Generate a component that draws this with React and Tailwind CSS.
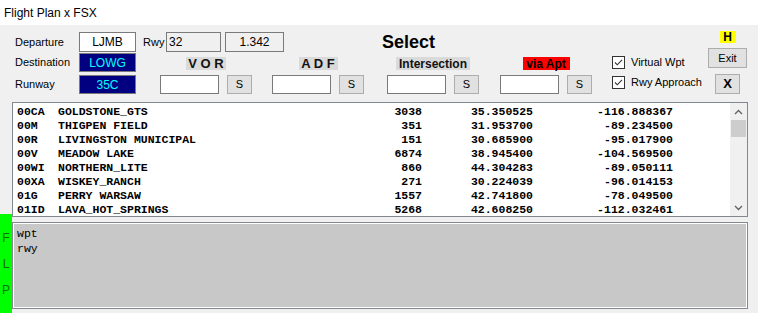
import React from "react";

const rows = [
  ["00CA", "GOLDSTONE_GTS", "3038", "35.350525", "-116.888367"],
  ["00M", "THIGPEN FIELD", "351", "31.953700", "-89.234500"],
  ["00R", "LIVINGSTON MUNICIPAL", "151", "30.685900", "-95.017900"],
  ["00V", "MEADOW LAKE", "6874", "38.945400", "-104.569500"],
  ["00WI", "NORTHERN_LITE", "860", "44.304283", "-89.050111"],
  ["00XA", "WISKEY_RANCH", "271", "30.224039", "-96.014153"],
  ["01G", "PERRY WARSAW", "1557", "42.741800", "-78.049500"],
  ["01ID", "LAVA_HOT_SPRINGS", "5268", "42.608250", "-112.032461"],
];

const sans = "font-['Liberation_Sans',Arial,sans-serif]";
const mono = "font-['Liberation_Mono','Courier_New',monospace]";

function SButton() {
  return (
    <div className="w-[25px] h-[19px] bg-[#e1e1e1] border border-[#adadad] flex items-center justify-center text-[11px] text-black">
      S
    </div>
  );
}

function Group({ label, labelClass, labelW }) {
  return (
    <div className="flex flex-col items-center w-[92px]">
      <div
        className={`h-[13px] flex items-center justify-center font-bold leading-none ${labelClass}`}
        style={{ width: labelW }}
      >
        {label}
      </div>
      <div className="mt-[5px] flex items-center gap-[8px]">
        <div className="w-[59px] h-[19px] bg-white border border-[#7a7a7a]" />
        <SButton />
      </div>
    </div>
  );
}

function Check({ label }) {
  return (
    <div className="flex items-center h-[13px]">
      <div className="w-[13px] h-[13px] bg-white border border-[#333333] flex items-center justify-center">
        <svg width="11" height="11" viewBox="0 0 11 11">
          <path d="M2 5.5 L4.3 7.8 L9 2.8" fill="none" stroke="#333333" strokeWidth="1.1" />
        </svg>
      </div>
      <span className="ml-[6px] text-[11px] leading-none text-black">{label}</span>
    </div>
  );
}

export default function App() {
  return (
    <div className={`w-[758px] h-[313px] bg-[#f0f0f0] flex flex-col overflow-hidden ${sans}`}>
      {/* title bar */}
      <div className="h-[25px] bg-white flex items-center pl-[4px] text-[12px] text-black shrink-0">
        Flight Plan x FSX
      </div>

      {/* controls */}
      <div className="h-[77px] flex items-start pl-[15px] shrink-0">
        {/* labels + boxes */}
        <div className="w-[121px] flex flex-col text-[11px] text-black">
          <div className="mt-[7px] h-[20px] flex items-center">
            <span className="w-[64px]">Departure</span>
            <div className="w-[57px] h-[20px] bg-white border border-[#7a7a7a] flex items-center justify-center text-[12px]">
              LJMB
            </div>
          </div>
          <div className="mt-[1px] h-[19px] flex items-center">
            <span className="w-[64px]">Destination</span>
            <div className="w-[57px] h-[19px] bg-[#000080] border border-[#7a7a7a] flex items-center justify-center text-[12px] text-[#00ffff]">
              LOWG
            </div>
          </div>
          <div className="mt-[3px] h-[19px] flex items-center">
            <span className="w-[64px]">Runway</span>
            <div className="w-[57px] h-[19px] bg-[#000080] border border-[#7a7a7a] flex items-center justify-center text-[12px] text-[#00ffff]">
              35C
            </div>
          </div>
        </div>

        {/* middle */}
        <div className="ml-[7px] w-[449px] flex flex-col">
          <div className="mt-[7px] h-[20px] flex items-center text-[11px] text-black">
            <span className="w-[23px] text-[11px]">Rwy</span>
            <div className="w-[55px] h-[20px] bg-[#f0f0f0] border border-[#7a7a7a] flex items-center pl-[2px] text-[12px]">
              32
            </div>
            <div className="ml-[4px] w-[59px] h-[20px] bg-[#f0f0f0] border border-[#7a7a7a] flex items-center justify-center text-[12px]">
              1.342
            </div>
            <span className="ml-[98px] text-[18px] font-bold leading-none text-black">Select</span>
          </div>
          <div className="mt-[5px] ml-[17px] flex items-start">
            <Group label="V O R" labelClass="bg-[#dadada] text-[13px] text-[#111]" labelW={40} />
            <div className="ml-[20px]">
              <Group label="A D F" labelClass="bg-[#dadada] text-[13px] text-[#111]" labelW={39} />
            </div>
            <div className="ml-[23px]">
              <Group label="Intersection" labelClass="bg-[#dadada] text-[12px] text-[#111]" labelW={74} />
            </div>
            <div className="ml-[21px]">
              <Group label="via Apt" labelClass="bg-[#ff0000] text-[12px] text-black" labelW={47} />
            </div>
          </div>
        </div>

        {/* checkboxes */}
        <div className="ml-[20px] w-[96px] flex flex-col">
          <div className="mt-[31px]">
            <Check label="Virtual Wpt" />
          </div>
          <div className="mt-[7px]">
            <Check label="Rwy Approach" />
          </div>
        </div>

        {/* right buttons */}
        <div className="w-[39px] flex flex-col items-center">
          <div className="mt-[6px] w-[16px] h-[12px] bg-[#ffff00] flex items-center justify-center text-[12px] font-bold leading-none text-black">
            H
          </div>
          <div className="mt-[5px] w-[39px] h-[20px] bg-[#e1e1e1] border border-[#adadad] flex items-center justify-center text-[11px] text-black">
            Exit
          </div>
          <div className="mt-[6px] w-[25px] h-[20px] bg-[#e1e1e1] border border-[#adadad] flex items-center justify-center text-[13px] font-bold text-black">
            X
          </div>
        </div>
      </div>

      {/* bottom */}
      <div className="flex-1 flex">
        <div className="w-[12px] flex flex-col">
          <div className="h-[112px]" />
          <div className="flex-1 bg-[#00ff00] flex flex-col items-center text-[12px] text-[#0b6e0b] leading-none">
            <span className="mt-[18px]">F</span>
            <span className="mt-[14px]">L</span>
            <span className="mt-[14px]">P</span>
          </div>
        </div>
        <div className="w-[736px] flex flex-col">
          {/* list box */}
          <div className="h-[115px] bg-white border border-[#828790] flex">
            <div className={`flex-1 pt-[2px] pl-[4px] ${mono} font-bold text-[11.5px] text-black`}>
              {rows.map((r) => (
                <div key={r[0]} className="h-[14px] flex items-center whitespace-pre leading-none">
                  <span className="w-[41px]">{r[0]}</span>
                  <span className="w-[322px]">{r[1]}</span>
                  <span className="w-[42px] text-right">{r[2]}</span>
                  <span className="w-[111px] text-right">{r[3]}</span>
                  <span className="w-[140px] text-right">{r[4]}</span>
                </div>
              ))}
            </div>
            <div className="w-[17px] bg-[#f0f0f0] flex flex-col items-center">
              <div className="h-[17px] flex items-center justify-center">
                <svg width="9" height="6" viewBox="0 0 9 6">
                  <path d="M1 5 L4.5 1.5 L8 5" fill="none" stroke="#606060" strokeWidth="1.3" />
                </svg>
              </div>
              <div className="w-[15px] h-[17px] bg-[#cdcdcd]" />
              <div className="flex-1" />
              <div className="h-[17px] flex items-center justify-center">
                <svg width="9" height="6" viewBox="0 0 9 6">
                  <path d="M1 1 L4.5 4.5 L8 1" fill="none" stroke="#606060" strokeWidth="1.3" />
                </svg>
              </div>
            </div>
          </div>
          {/* text area */}
          <div className="mt-[5px] h-[87px] border border-[#828790]">
            <div className={`h-full border border-white bg-[#c8c8c8] pl-[3px] pt-[2px] ${mono} text-[11.5px] leading-[15px] text-black`}>
              <div>wpt</div>
              <div>rwy</div>
            </div>
          </div>
        </div>
      </div>
    </div>
  );
}
